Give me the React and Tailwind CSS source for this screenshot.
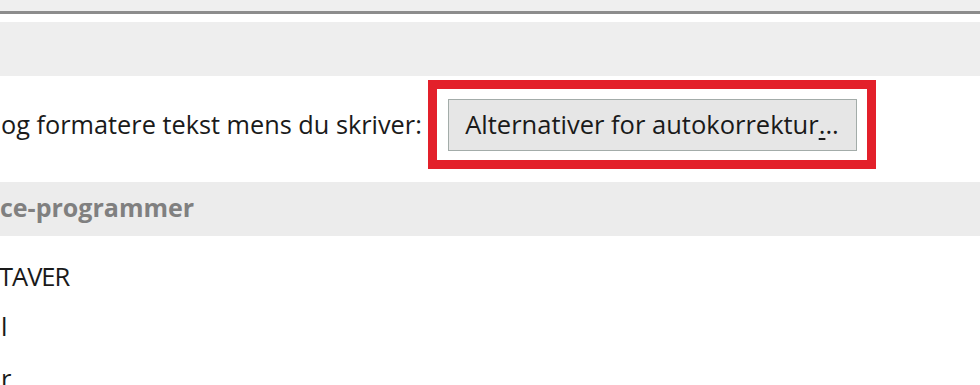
export default function App() {
  return (
    <div
      className="w-[980px] h-[385px] overflow-hidden bg-white text-[#1a1a1a]"
      style={{ fontFamily: '"Open Sans", "Noto Sans", sans-serif' }}
    >
      {/* Top strip and divider */}
      <div className="h-[11px] bg-[#efefef]" />
      <div className="h-[3px] bg-[#8c8c8c]" />
      <div className="h-[8px] bg-white" />

      {/* Section header */}
      <div className="h-[54px] bg-[#eeeeee]" />

      {/* Autocorrect row */}
      <div className="h-[106px] flex items-start pt-[4px]">
        <span className="ml-[1px] mt-[28px] text-[25.3px] leading-[32px] whitespace-nowrap">
          og formatere tekst mens du skriver:
        </span>
        <div className="ml-auto mr-[104px] w-[448px] h-[89px] border-[9px] border-[#e3202a] bg-white flex items-center justify-center">
          <button className="w-[409px] h-[52px] bg-[#e6e6e6] border border-[#a3aca9] text-[25.5px] leading-[32px] text-[#1a1a1a] pb-[2px]">
            Alternativer for autokorrektur<span className="underline underline-offset-[4px]">.</span>..
          </button>
        </div>
      </div>

      {/* Section header */}
      <div className="h-[54px] bg-[#ececec] flex items-center">
        <span className="text-[25px] font-bold text-[#808080] leading-[32px] -mt-[4px] whitespace-nowrap">
          ce-programmer
        </span>
      </div>

      {/* Options list */}
      <div className="flex flex-col text-[25.5px] leading-[32px] whitespace-nowrap">
        <span className="-ml-[1px] mt-[24px] tracking-[-1px]">TAVER</span>
        <span className="ml-[1px] mt-[18px]">l</span>
        <span className="ml-[1px] mt-[20px]">r</span>
      </div>
    </div>
  )
}
